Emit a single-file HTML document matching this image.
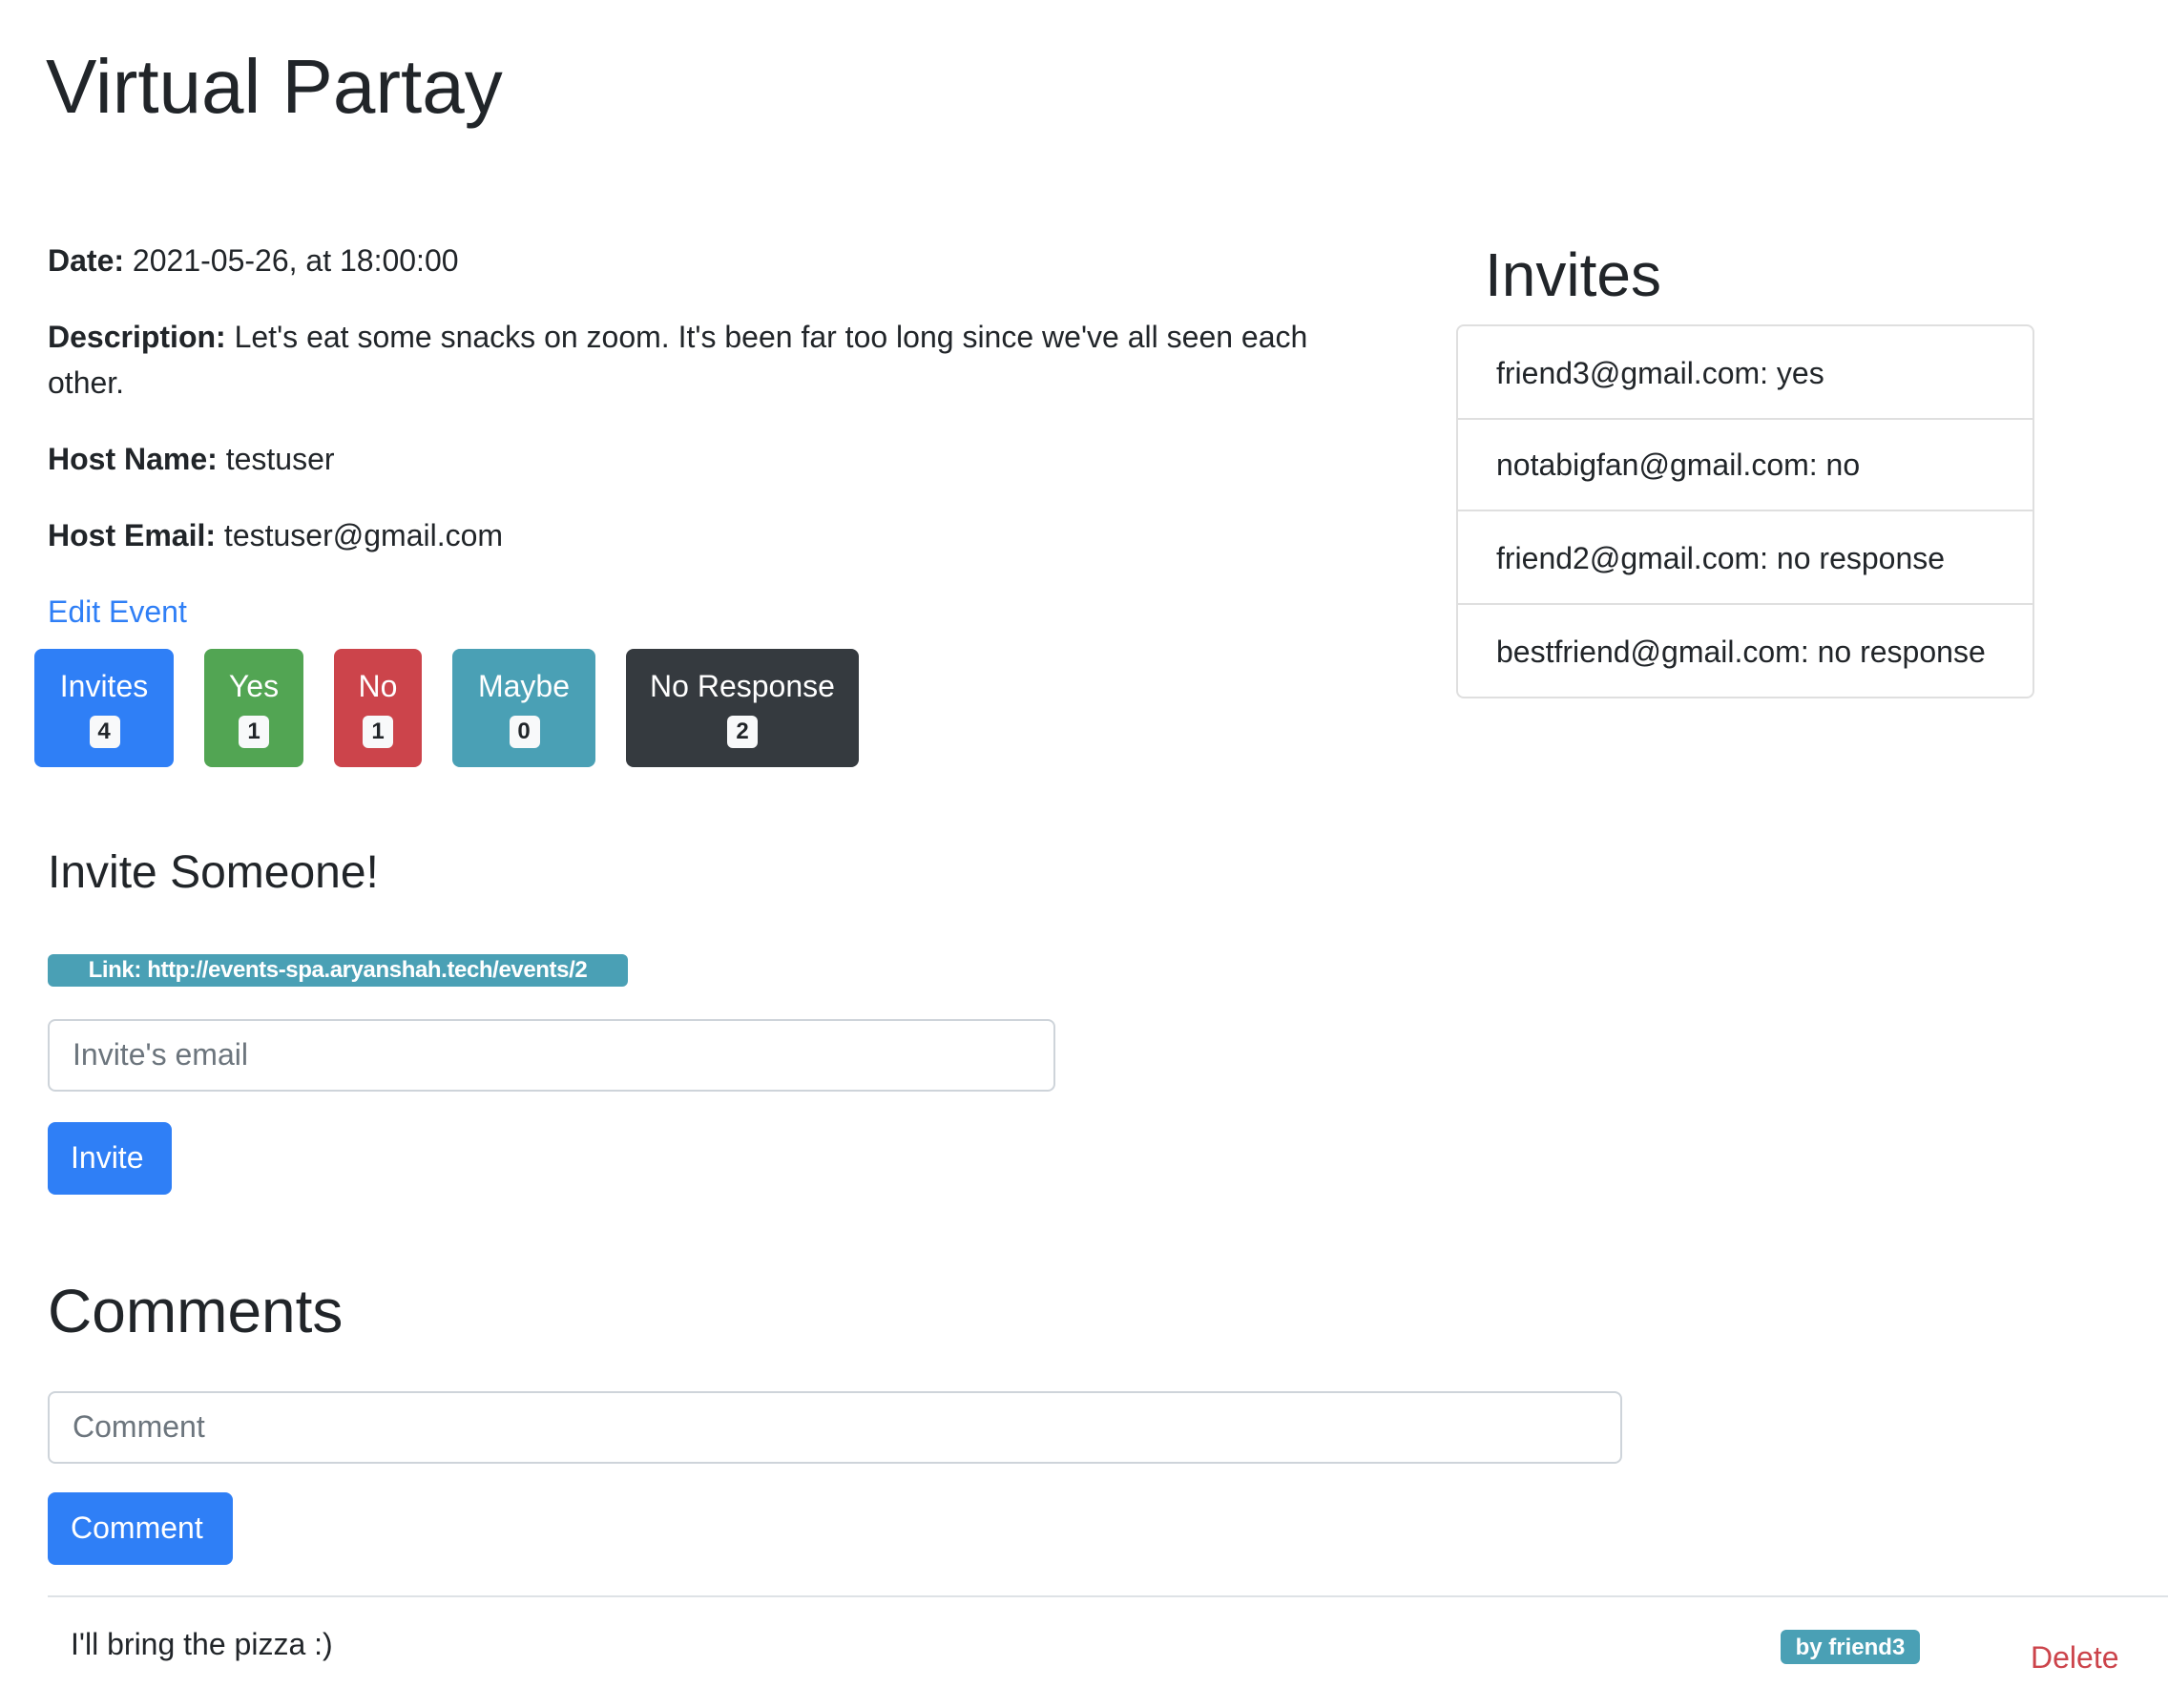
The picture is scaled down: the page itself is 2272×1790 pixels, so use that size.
<!DOCTYPE html>
<html><head><meta charset="utf-8"><style>
html,body{margin:0;padding:0;background:#fff;}
body{width:2272px;height:1790px;overflow:hidden;}
#s{position:absolute;left:0;top:0;width:1136px;height:895px;transform:scale(2);transform-origin:0 0;font-family:"Liberation Sans",sans-serif;color:#212529;font-size:16px;line-height:24px;}
#s div,#s span.a{position:absolute;white-space:nowrap;}
b{font-weight:700;}
.btn{border-radius:4px;color:#fff;text-align:center;height:62px;top:340px;}
.btn .t{position:absolute;left:0;right:0;top:9px;line-height:24px;}
.btn .bd{position:absolute;left:50%;top:35px;height:17px;width:16px;margin-left:-8px;background:#f8f9fa;color:#212529;border-radius:3px;font-size:12px;font-weight:700;line-height:17px;text-align:center;}
.li{left:763px;width:301px;height:48px;border:1px solid #dfdfdf;border-top:none;}
.li span{position:absolute;left:20px;top:14px;}
.inp{border:1px solid #ced4da;border-radius:4px;background:#fff;}
.inp span{position:absolute;left:12px;top:7px;color:#6c757d;}
.pb{background:#2f7ff6;border-radius:4px;color:#fff;}
.pb span{position:absolute;left:12px;top:8px;}
</style></head><body><div id="s">
<div style="left:24px;top:22px;font-size:40px;line-height:48px;font-weight:500;">Virtual Partay</div>
<div style="left:25px;top:126px;"><b>Date:</b> 2021-05-26, at 18:00:00</div>
<div style="left:25px;top:166px;"><b>Description:</b> Let's eat some snacks on zoom. It's been far too long since we've all seen each<br>other.</div>
<div style="left:25px;top:230px;"><b>Host Name:</b> testuser</div>
<div style="left:25px;top:270px;"><b>Host Email:</b> testuser@gmail.com</div>
<div style="left:25px;top:310px;color:#2f7ff6;">Edit Event</div>

<div class="btn" style="left:18px;width:73px;background:#2f7ff6;"><span class="t">Invites</span><span class="bd">4</span></div>
<div class="btn" style="left:107px;width:52px;background:#52a553;"><span class="t">Yes</span><span class="bd">1</span></div>
<div class="btn" style="left:175px;width:46px;background:#cc444b;"><span class="t">No</span><span class="bd">1</span></div>
<div class="btn" style="left:237px;width:75px;background:#4aa0b5;"><span class="t">Maybe</span><span class="bd">0</span></div>
<div class="btn" style="left:328px;width:122px;background:#353a3f;"><span class="t">No Response</span><span class="bd">2</span></div>

<div style="left:25px;top:443px;font-size:24px;line-height:29px;font-weight:500;">Invite Someone!</div>
<div style="left:25px;top:500px;width:304px;height:17px;background:#4aa0b5;border-radius:3px;color:#fff;font-size:12px;font-weight:700;line-height:17px;text-align:center;letter-spacing:-0.2px;">Link: http://events-spa.aryanshah.tech/events/2</div>
<div class="inp" style="left:25px;top:534px;width:526px;height:36px;"><span>Invite's email</span></div>
<div class="pb" style="left:25px;top:588px;width:65px;height:38px;"><span>Invite</span></div>

<div style="left:25px;top:668px;font-size:32px;line-height:38px;font-weight:500;">Comments</div>
<div class="inp" style="left:25px;top:729px;width:823px;height:36px;"><span>Comment</span></div>
<div class="pb" style="left:25px;top:782px;width:97px;height:38px;"><span>Comment</span></div>
<div style="left:25px;top:836px;width:1111px;height:1px;background:#dee2e6;"></div>
<div style="left:37px;top:851px;">I'll bring the pizza :)</div>
<div style="left:933px;top:854px;width:73px;height:18px;background:#4aa0b5;border-radius:3px;color:#fff;font-size:12px;font-weight:700;line-height:18px;text-align:center;">by friend3</div>
<div style="left:1064px;top:858px;color:#cc444b;">Delete</div>

<div style="left:778px;top:125px;font-size:32px;line-height:38px;font-weight:500;">Invites</div>
<div class="li" style="top:170px;border-top:1px solid #dfdfdf;border-radius:4px 4px 0 0;"><span>friend3@gmail.com: yes</span></div>
<div class="li" style="top:219px;"><span>notabigfan@gmail.com: no</span></div>
<div class="li" style="top:268px;"><span>friend2@gmail.com: no response</span></div>
<div class="li" style="top:317px;border-radius:0 0 4px 4px;"><span>bestfriend@gmail.com: no response</span></div>
</div></body></html>
